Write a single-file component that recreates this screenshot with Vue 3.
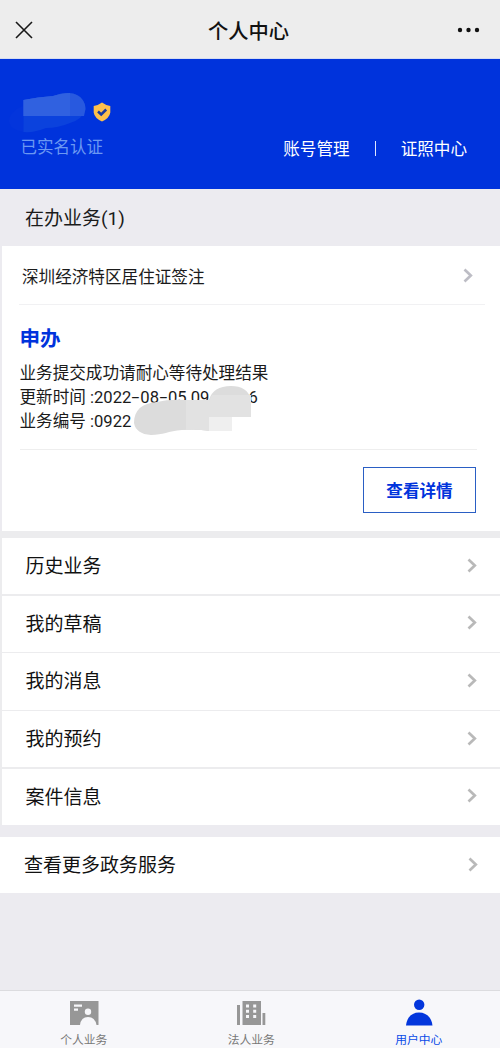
<script setup>
const items = ['历史业务', '我的草稿', '我的消息', '我的预约', '案件信息']
</script>

<template>
  <div class="page">
    <header class="nav">
      <svg class="close" width="18" height="18" viewBox="0 0 18 18"><path d="M1 1L17 17M17 1L1 17" /></svg>
      <h1>个人中心</h1>
      <svg class="more" width="24" height="6" viewBox="0 0 24 6"><circle cx="3" cy="3" r="2.2" /><circle cx="11.5" cy="3" r="2.2" /><circle cx="20" cy="3" r="2.2" /></svg>
    </header>

    <section class="profile">
      <div class="who">
        <div class="name-row">
          <svg class="mask" width="78" height="44" viewBox="0 0 78 44">
            <path d="M15 14C7 17 0 23 1 30C2 36 9 39 16 40Z" fill="#0335dc" />
            <path d="M15.500 8Q30 5 45 4Q56 0 65 1.500Q77 5 77.500 17Q75 27 62 31Q50 36 38 36Q26 41 15.500 40Z" fill="#0b42dd" />
            <path d="M15.500 8Q30 5 45 4Q56 0 65 1.500Q77 5 77.500 17L76 24H15.500Z" fill="#2859df" />
            <path d="M15.500 8Q30 5 45 4Q55 1 62 1V24H15.500Z" fill="#3061e0" />
          </svg>
          <svg class="shield" width="18" height="20" viewBox="0 0 18 20">
            <path d="M9 .4Q13 3.300 17.300 4.100V10.500Q16.500 16 9 19.600Q1.500 16 .7 10.500V4.100Q5 3.300 9 .4Z" fill="#fdc04b" />
            <path d="M5 9.500L8.200 12.500L13.200 7.500" fill="none" stroke="#17399f" stroke-width="2.500" />
          </svg>
        </div>
        <div class="verified">已实名认证</div>
      </div>
      <div class="links"><span>账号管理</span><i></i><span>证照中心</span></div>
    </section>

    <h2 class="section-title">在办业务(1)</h2>

    <section class="card">
      <div class="card-head">
        <span>深圳经济特区居住证签注</span>
        <svg class="chev" width="10" height="15" viewBox="0 0 10 15"><path d="M1.500 1.500L7.800 7.500L1.500 13.500" /></svg>
      </div>
      <div class="card-body">
        <h3>申办</h3>
        <p>业务提交成功请耐心等待处理结果</p>
        <p>更新时间 :2022<b class="dash">-</b>08<b class="dash">-</b>05 09<span class="hidden-time"></span>6</p>
        <p>业务编号 :0922</p>
        <svg class="smudge" width="120" height="52" viewBox="0 0 120 52">
          <path d="M1 38C1 25 9 18 24 17Q36 14 52 15L76 15Q80 1 98 1Q114 1 118 14V32H99V46H76Q65 44 49 45C35 46 30 50 18 50Q3 49 1 38Z" fill="#dcdcdc" />
          <path d="M53 15H76L79 10H118V32H99V46H76Q65 44 53 45Z" fill="#e2e2e2" />
          <path d="M76 32H99V46H76Z" fill="#efefef" />
        </svg>
      </div>
      <div class="card-foot"><button>查看详情</button></div>
    </section>

    <nav class="list">
      <div v-for="item in items" :key="item" class="row">
        <span>{{ item }}</span>
        <svg class="chev" width="10" height="15" viewBox="0 0 10 15"><path d="M1.500 1.500L7.800 7.500L1.500 13.500" /></svg>
      </div>
    </nav>

    <div class="row extra">
      <span>查看更多政务服务</span>
      <svg class="chev" width="10" height="15" viewBox="0 0 10 15"><path d="M1.500 1.500L7.800 7.500L1.500 13.500" /></svg>
    </div>

    <footer class="tabs">
      <div class="tab">
        <svg width="30" height="28" viewBox="0 0 30 28">
          <path d="M1 2H29.500V26H1Z" fill="#979797" />
          <path d="M5 5.500H13V7.700H5ZM5 9.500H9V11.700H5Z" fill="#f7f7fa" />
          <circle cx="19" cy="12.700" r="3.200" fill="#f7f7fa" />
          <path d="M11 26Q12 18 19 18Q26 18 27.500 26Z" fill="#f7f7fa" />
        </svg>
        <span>个人业务</span>
      </div>
      <div class="tab">
        <svg width="30" height="28" viewBox="0 0 30 28">
          <path d="M1 6H4V26H1ZM6.500 2H25V26H6.500ZM26.500 14H29.300V26H26.500Z" fill="#979797" />
          <path d="M10 5.500H13V8.500H10ZM10 10.700H13V13.700H10ZM10 15.900H13V18.900H10ZM17.200 5.500H20.200V8.500H17.200ZM17.200 10.700H20.200V13.700H17.200ZM17.200 15.900H20.200V18.900H17.200Z" fill="#f7f7fa" />
        </svg>
        <span>法人业务</span>
      </div>
      <div class="tab active">
        <svg width="30" height="28" viewBox="0 0 30 28">
          <circle cx="15.200" cy="5.700" r="5.200" fill="#0336dc" />
          <path d="M2 26.500C3 18 8 13.500 15 13.500S27.500 18 28.500 26.500Z" fill="#0336dc" />
        </svg>
        <span>用户中心</span>
      </div>
    </footer>
  </div>
</template>

<style>
body { background: #ecebf0; }
</style>

<style scoped>
* { box-sizing: border-box; }
.page {
  width: 500px; height: 1048px; display: flex; flex-direction: column; overflow: hidden;
  background: #ecebf0; color: #1b1b1b;
  font-family: Roboto, "Noto Sans CJK SC", sans-serif; font-size: 16.6px;
}
h1, h2, h3, p { margin: 0; }
.nav {
  height: 59px; flex: none; display: flex; align-items: center; justify-content: space-between;
  padding: 1px 19px 0 15px; background: #ededed; border-bottom: 1px solid #d5dcf0; color: #111;
}
.close path { stroke: #181818; stroke-width: 1.6; fill: none; }
.nav h1 { font-size: 20.3px; font-weight: 500; line-height: 30px; margin-left: 7px; padding-top: 4px; }
.more { fill: #111; }
.profile {
  height: 130px; flex: none; display: flex; justify-content: space-between;
  background: #0033dc; color: #fff; padding: 33px 33px 0 8px;
}
.name-row { display: flex; gap: 7px; height: 44px; }
.shield { margin-top: 9.5px; }
.verified { margin: 0 0 0 12.5px; line-height: 24px; font-size: 16.5px; color: #6b98f2; }
.links { display: flex; height: 24px; align-items: center; margin-top: 44px; }
.links i { width: 1.5px; height: 15px; background: #dfe7ff; margin: 0 24.5px 0 25px; }
.section-title {
  flex: none; height: 57px; line-height: 56px; padding: 1.5px 0 0 25px;
  font-size: 19px; font-weight: 400;
}
.card { flex: none; height: 285px; margin-left: 2px; background: #fff; }
.chev { flex: none; fill: none; stroke: #bdbdc5; stroke-width: 2.7; }
.card-head {
  height: 59px; margin: 0 15px 0 17px; padding: 1px 12px 0 3px; border-bottom: 1px solid #f1f1f3;
  display: flex; align-items: center; justify-content: space-between;
}
.card-body { position: relative; height: 145px; margin: 0 23px 0 17.5px; padding-top: 18px; border-bottom: 1px solid #eee; }
.card-body h3 { font-size: 20.6px; line-height: 32px; font-weight: 700; color: #0033dc; margin-bottom: 7px; }
.card-body p { line-height: 24px; height: 24px; white-space: pre; }
.dash { display: inline-block; width: 9px; font-weight: 400; text-align: center; transform: scaleX(1.7); }
.hidden-time { display: inline-block; width: 39px; }
.smudge { position: absolute; left: 113.5px; top: 80px; }
.card-foot { display: flex; justify-content: flex-end; padding: 17px 24px 0 0; }
button {
  width: 113px; height: 46px; padding: 0; border: 1.5px solid #2a5ec4; background: #fff; color: #0033dc;
  font: 700 16.6px/42px "Noto Sans CJK SC", sans-serif;
}
.list {
  flex: none; display: flex; flex-direction: column; gap: 1.5px; padding: 7px 0 0 2px; background: #ececee;
}
.row {
  height: 56.2px; display: flex; align-items: center; justify-content: space-between;
  background: #fff; color: #111; font-size: 19px; padding: 0 23px 2px 23.5px;
}
.row .chev { stroke: #b9b9b9; }
.row span { line-height: 28px; padding-top: 3.5px; }
.extra { flex: none; margin-top: 12px; padding: 0 22px 2px 24px; }
.tabs {
  flex: none; height: 58px; margin-top: auto; border-top: 1.5px solid #dcdcdf; background: #f7f7fa;
  display: flex;
}
.tab { width: 167.5px; flex: none; display: flex; flex-direction: column; align-items: center; padding-top: 8px; color: #777; font-size: 11.8px; line-height: 18px; }
.tab svg { flex: none; }
.tab span { margin-top: 4px; }
.tab.active { color: #0a4be8; }
</style>
